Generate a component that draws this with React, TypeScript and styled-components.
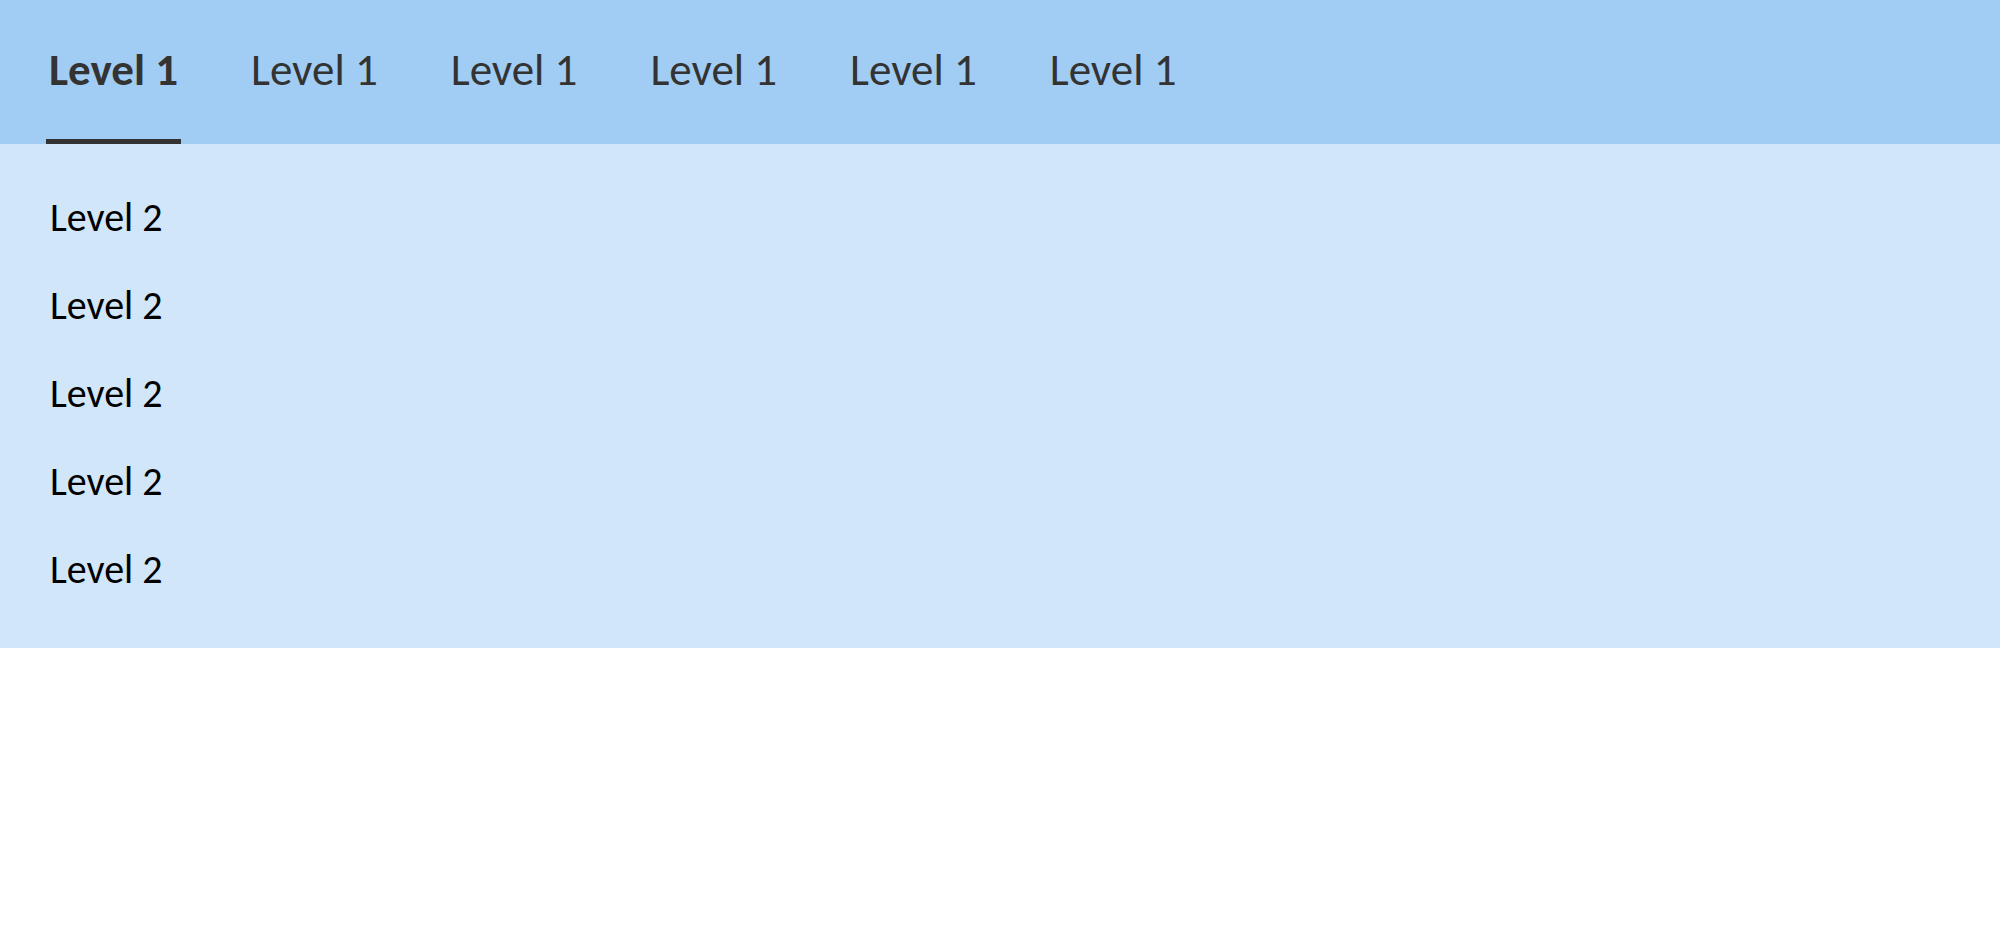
import { useState } from 'react';
import styled, { createGlobalStyle } from 'styled-components';

const GlobalStyle = createGlobalStyle`
	html, body {
		margin: 0;
		padding: 0;
		background: #ffffff;
	}
	body {
		font-family: Calibri, Carlito, Lato, 'Open Sans', sans-serif;
	}
`;

const topItems = ['Level 1', 'Level 1', 'Level 1', 'Level 1', 'Level 1', 'Level 1'];
const subItems = ['Level 2', 'Level 2', 'Level 2', 'Level 2', 'Level 2'];

export default function App() {
	const [active, setActive] = useState<number>(0);

	return (
		<>
			<GlobalStyle />
			<StyledNav>
				<StyledTopList>
					{topItems.map((label, i) => (
						<StyledTab
							key={i}
							type="button"
							$active={i === active}
							onClick={() => setActive(i)}
						>
							{label}
						</StyledTab>
					))}
				</StyledTopList>
				<StyledSubList>
					{subItems.map((label, i) => (
						<StyledSubItem key={i}>{label}</StyledSubItem>
					))}
				</StyledSubList>
			</StyledNav>
		</>
	);
}

const StyledNav = styled.nav`
	display: flex;
	flex-direction: column;
	width: 100%;
`;

const StyledTopList = styled.div`
	display: flex;
	align-items: stretch;
	gap: 67px;
	height: 144px;
	padding-left: 46px;
	background-color: #a1cdf4;
`;

const StyledTab = styled.button<{ $active: boolean }>`
	display: flex;
	align-items: center;
	padding: 0 3px;
	border: none;
	border-bottom: 5px solid ${({ $active }) => ($active ? '#333333' : 'transparent')};
	background: none;
	color: #333333;
	font-family: inherit;
	font-size: 45px;
	font-weight: ${({ $active }) => ($active ? 700 : 400)};
	cursor: pointer;
`;

const StyledSubList = styled.div`
	display: flex;
	flex-direction: column;
	padding: 29px 0 35px 50px;
	background-color: #d1e6f9;
`;

const StyledSubItem = styled.div`
	display: flex;
	align-items: center;
	height: 88px;
	color: #000000;
	font-size: 40px;
`;
